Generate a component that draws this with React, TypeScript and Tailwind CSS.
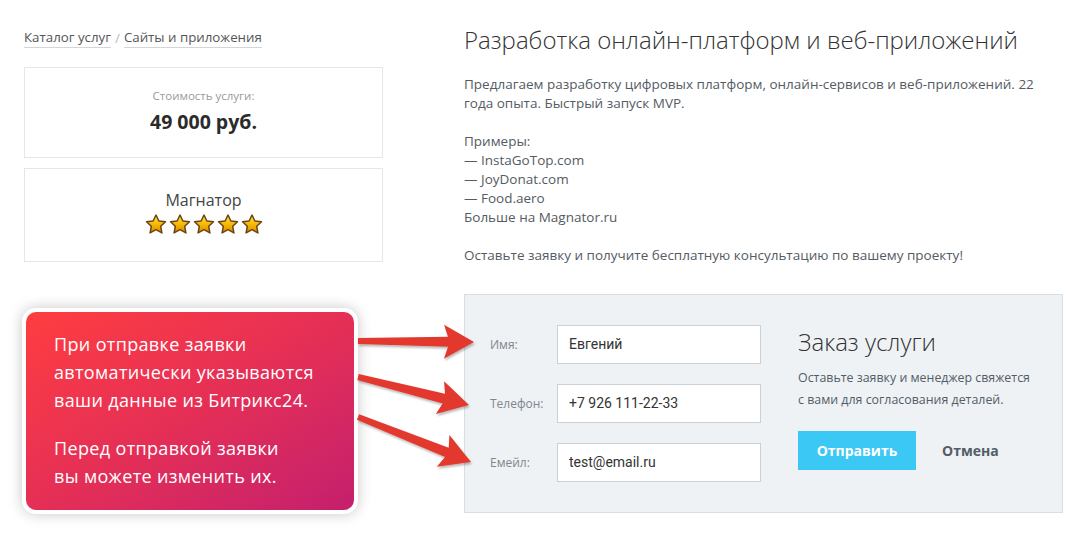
import React from "react";

const sans = { fontFamily: '"Open Sans", "Liberation Sans", sans-serif' };

// polygon for a fat arrow from (x1,y1) to the tip (x2,y2)
function arrowPoints(x1: number, y1: number, x2: number, y2: number, shaft = 8, head = 34, headLen = 26) {
  const dx = x2 - x1;
  const dy = y2 - y1;
  const len = Math.hypot(dx, dy);
  const ux = dx / len;
  const uy = dy / len;
  const nx = -uy;
  const ny = ux;
  const bx = x2 - ux * headLen;
  const by = y2 - uy * headLen;
  const pts = [
    [x1 + nx * (shaft / 2 - 1), y1 + ny * (shaft / 2 - 1)],
    [bx + nx * (shaft / 2 + 1), by + ny * (shaft / 2 + 1)],
    [bx - ux * 4 + nx * (head / 2), by - uy * 4 + ny * (head / 2)],
    [x2, y2],
    [bx - ux * 4 - nx * (head / 2), by - uy * 4 - ny * (head / 2)],
    [bx - nx * (shaft / 2 + 1), by - ny * (shaft / 2 + 1)],
    [x1 - nx * (shaft / 2 - 1), y1 - ny * (shaft / 2 - 1)],
  ];
  return pts.map((p) => p.map((v) => v.toFixed(1)).join(",")).join(" ");
}

const Star = () => (
  <svg width="22" height="20" viewBox="0 0 22 20">
    <defs>
      <linearGradient id="starFill" x1="0" y1="0" x2="0" y2="1">
        <stop offset="0%" stopColor="#ffe24d" />
        <stop offset="55%" stopColor="#f5b700" />
        <stop offset="100%" stopColor="#d98800" />
      </linearGradient>
    </defs>
    <path
      d="M11 1l2.9 6 6.6.8-4.8 4.5 1.2 6.6L11 15.7l-5.9 3.2 1.2-6.6L1.5 7.8l6.6-.8z"
      fill="url(#starFill)"
      stroke="#6a4512"
      strokeWidth="1.5"
      strokeLinejoin="round"
    />
  </svg>
);

const Field = ({ label, value }: { label: string; value: string }) => (
  <div className="flex items-center">
    <div className="w-[67px] text-[12px] text-[#80868e]" style={sans}>
      {label}
    </div>
    <div
      className="w-[204px] h-[39px] bg-white border border-[#c9d0d6] flex items-center px-[11px] text-[14px] text-[#333]"
      style={{ fontFamily: 'Roboto, "Liberation Sans", sans-serif' }}
    >
      {value}
    </div>
  </div>
);

export default function App() {
  return (
    <div className="relative w-[1091px] h-[555px] bg-white overflow-hidden" style={sans}>
      <div className="flex pl-[24px] pt-[23px]">
        {/* left column */}
        <div className="w-[359px] flex flex-col">
          <div className="mt-[5px] h-[20px] text-[13.3px] leading-[20px] text-[#555] flex">
            <span className="border-b border-[#d5d5d5] leading-[19px]">Каталог услуг</span>
            <span className="text-[#bbb] mx-[4px]">/</span>
            <span className="border-b border-[#d5d5d5] leading-[19px]">Сайты и приложения</span>
          </div>

          <div className="mt-[19px] h-[91px] border border-[#e6e6e6] flex flex-col items-center pt-[20px]">
            <div className="text-[11.5px] leading-[16px] text-[#9a9a9a]">Стоимость услуги:</div>
            <div className="mt-[5px] text-[19.5px] leading-[26px] font-bold text-[#2b2b2b]">49 000 руб.</div>
          </div>

          <div className="mt-[10px] h-[94px] border border-[#e6e6e6] flex flex-col items-center pt-[20px]">
            <div className="text-[16px] leading-[22px] text-[#444]">Магнатор</div>
            <div className="mt-[3px] flex gap-[2px]">
              <Star />
              <Star />
              <Star />
              <Star />
              <Star />
            </div>
          </div>

          <div className="mt-[46px] -ml-[2px] w-[336px] h-[206px] rounded-[14px] bg-white p-[4px] shadow-[0_0_14px_rgba(0,0,0,0.22)]">
            <div className="w-full h-full rounded-[10px] bg-gradient-to-br from-[#ff3d3f] via-[#e52f55] to-[#c51f6d] pl-[28px] pt-[18px] text-white text-[18px] leading-[28px] tracking-[0.35px]">
              <p>
                При отправке заявки
                <br />
                автоматически указываются
                <br />
                ваши данные из Битрикс24.
              </p>
              <p className="mt-[20px]">
                Перед отправкой заявки
                <br />
                вы можете изменить их.
              </p>
            </div>
          </div>
        </div>

        {/* right column */}
        <div className="ml-[81px] w-[599px] flex flex-col">
          <h1 className="text-[24px] leading-[34px] font-light text-[#333] whitespace-nowrap">
            Разработка онлайн-платформ и веб-приложений
          </h1>
          <div className="mt-[18px] text-[13.5px] leading-[19px] text-[#545b63]">
            <p>
              Предлагаем разработку цифровых платформ, онлайн-сервисов и веб-приложений. 22 года опыта. Быстрый запуск
              MVP.
            </p>
            <p className="mt-[19px]">
              Примеры:
              <br />— InstaGoTop.com
              <br />— JoyDonat.com
              <br />— Food.aero
              <br />
              Больше на Magnator.ru
            </p>
            <p className="mt-[19px]">Оставьте заявку и получите бесплатную консультацию по вашему проекту!</p>
          </div>

          <div className="mt-[29px] h-[219px] bg-[#eef2f4] border border-[#d8dee3] flex pl-[25px] pt-[30px]">
            <div className="flex flex-col gap-[20px]">
              <Field label="Имя:" value="Евгений" />
              <Field label="Телефон:" value="+7 926 111-22-33" />
              <Field label="Емейл:" value="test@email.ru" />
            </div>
            <div className="ml-[37px] flex flex-col pt-[1px]">
              <div className="text-[24px] leading-[32px] font-light text-[#333]">Заказ услуги</div>
              <div className="mt-[9px] text-[12.4px] leading-[22px] text-[#535c69]">
                Оставьте заявку и менеджер свяжется
                <br />с вами для согласования деталей.
              </div>
              <div className="mt-[20px] flex items-center">
                <div className="w-[118px] h-[39px] bg-[#3bc8f5] text-white text-[14px] font-bold flex items-center justify-center">
                  Отправить
                </div>
                <div className="ml-[26px] text-[14px] font-bold text-[#535c69]">Отмена</div>
              </div>
            </div>
          </div>
        </div>
      </div>

      {/* arrows from the callout to the form labels */}
      <svg className="absolute left-0 top-0 pointer-events-none" width="1091" height="555">
        <defs>
          <filter id="arrowShadow" x="-20%" y="-20%" width="140%" height="140%">
            <feDropShadow dx="1" dy="2" stdDeviation="1.2" floodColor="#000" floodOpacity="0.28" />
          </filter>
        </defs>
        <g fill="#e2392f" filter="url(#arrowShadow)">
          <polygon points={arrowPoints(358, 341, 474, 342, 8, 34, 26)} />
          <polygon points={arrowPoints(358, 377, 469, 405, 8, 34, 26)} />
          <polygon points={arrowPoints(358, 417, 471, 462, 8, 34, 26)} />
        </g>
      </svg>
    </div>
  );
}
